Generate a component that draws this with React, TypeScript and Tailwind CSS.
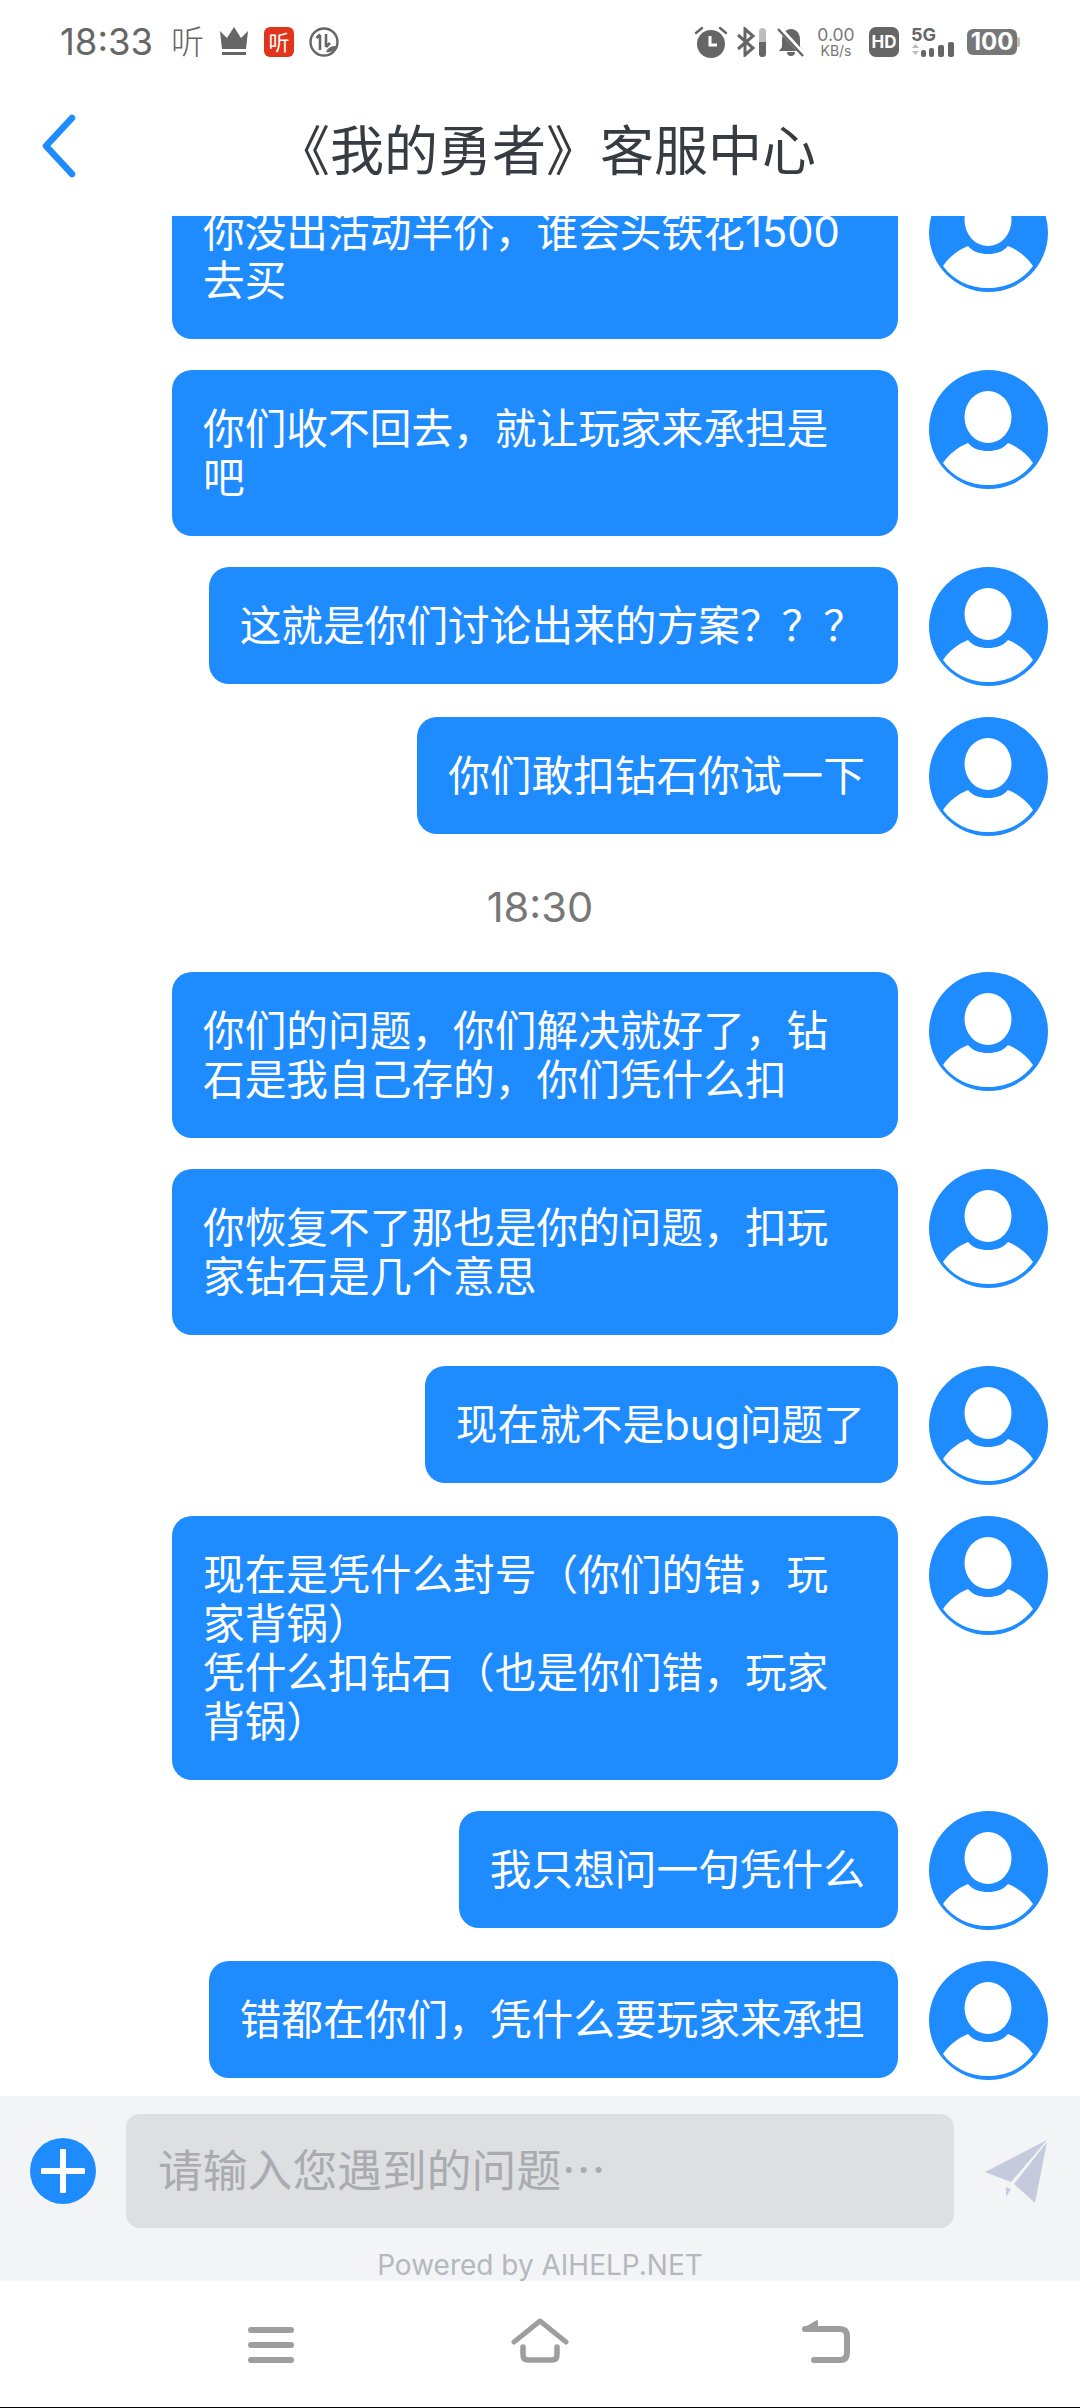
import React from 'react';

const messages: (string | { time: string })[] = [
  '你没出活动半价，谁会头铁花1500去买',
  '你们收不回去，就让玩家来承担是吧',
  '这就是你们讨论出来的方案？？？',
  '你们敢扣钻石你试一下',
  { time: '18:30' },
  '你们的问题，你们解决就好了，钻石是我自己存的，你们凭什么扣',
  '你恢复不了那也是你的问题，扣玩家钻石是几个意思',
  '现在就不是bug问题了',
  '现在是凭什么封号（你们的错，玩家背锅）\n凭什么扣钻石（也是你们错，玩家背锅）',
  '我只想问一句凭什么',
  '错都在你们，凭什么要玩家来承担',
];

function Avatar() {
  return (
    <svg width="119" height="119" viewBox="0 0 119 119" className="shrink-0">
      <circle cx="59.5" cy="59.5" r="59.5" fill="#1e8bff" />
      <ellipse cx="59" cy="47" rx="23.5" ry="26" fill="#fff" />
      <path d="M14 93 C20 84 29 77 39 73 C44 79 51 81 59 81 C67 81 74 79 79 73 C89 77 98 84 104 93 C94 107 78 115 59 115 C40 115 24 107 14 93 Z" fill="#fff" />
    </svg>
  );
}

function Bubble({ text }: { text: string }) {
  return (
    <div className="flex items-start justify-end gap-[31px]">
      <div className="max-w-[726px] whitespace-pre-line rounded-[20px] bg-[#1e8bff] pb-[33px] pl-[31px] pr-[33px] pt-[35px] text-[41.7px] leading-[49px] text-white">
        {text}
      </div>
      <Avatar />
    </div>
  );
}

function StatusLeft() {
  return (
    <div className="flex items-center gap-[15px]">
      <span className="mr-[3px] text-[36.5px] leading-none text-[#666]">18:33</span>
      <span className="text-[33px] font-light leading-none text-[#666]">听</span>
      <svg width="30" height="30" viewBox="0 0 30 30">
        <path d="M1 4 L8 11 L15 0 L22 11 L29 4 L27 22 H3 Z" fill="#666" />
        <rect x="3" y="25" width="24" height="3" fill="#666" />
      </svg>
      <div className="flex h-[30px] w-[30px] items-center justify-center rounded-[6px] bg-[#e0341c] text-[21px] leading-none text-white">听</div>
      <svg width="30" height="30" viewBox="0 0 30 30" fill="none" stroke="#666">
        <circle cx="15" cy="15" r="13.5" strokeWidth="2.4" />
        <path d="M11 23 V8 M7.5 11 L11 7.5" strokeWidth="2.6" />
        <path d="M17 7 V20 M17 20 L21 16" strokeWidth="2.6" />
        <path d="M17 25 C19 20 23 19 27 19 C26 23 22 26 17 25 Z" fill="#666" stroke="none" />
      </svg>
    </div>
  );
}

function StatusRight() {
  return (
    <div className="flex items-center">
      <svg width="34" height="32" viewBox="0 0 34 32" className="mr-[8px]">
        <circle cx="17" cy="18" r="14" fill="#666" />
        <path d="M16 10 V19 H23" fill="none" stroke="#fff" strokeWidth="3" />
        <path d="M2 7 L8 2 M32 7 L26 2" stroke="#666" strokeWidth="2.4" strokeLinecap="round" />
      </svg>
      <svg width="32" height="30" viewBox="0 0 32 30" className="mr-[9px]">
        <path d="M2 8 L17 21 L9 28 V2 L17 9 L2 22" fill="none" stroke="#666" strokeWidth="3" />
        <rect x="23" y="1" width="7" height="29" rx="3.5" fill="#bdbdbd" />
        <path d="M23 15 H30 V26.5 A3.5 3.5 0 0 1 23 26.5 Z" fill="#666" />
      </svg>
      <svg width="28" height="30" viewBox="0 0 28 30" className="mr-[12px]">
        <path d="M14 2 C20 2 23 7 23 13 V20 L26 24 H2 L5 20 V13 C5 7 8 2 14 2 Z" fill="#666" />
        <path d="M10 25 A4 4 0 0 0 18 25 Z" fill="#666" />
        <path d="M2 1 L27 28" stroke="#fff" strokeWidth="5" />
        <path d="M1 2 L26 29" stroke="#666" strokeWidth="2.4" />
      </svg>
      <div className="mr-[14px] flex w-[38px] flex-col items-center text-[#777]">
        <span className="text-[17.5px] leading-[16px]">0.00</span>
        <span className="text-[14px] leading-[15px]">KB/s</span>
      </div>
      <div className="mr-[12px] flex h-[30px] w-[30px] items-center justify-center rounded-[7px] bg-[#666] text-[17px] font-bold leading-none text-white">HD</div>
      <div className="mr-[10px] flex h-[30px] w-[46px] flex-col">
        <span className="text-[18px] font-bold leading-[15px] text-[#666]">5G</span>
        <svg width="46" height="15" viewBox="0 0 46 15">
          <path d="M1 6 L4.5 2 L8 6 Z M1 9 L4.5 13 L8 9 Z" fill="#bbb" />
          <rect x="10" y="8" width="5" height="7" rx="2" fill="#666" />
          <rect x="18" y="6" width="5" height="9" rx="2" fill="#666" />
          <rect x="27" y="3" width="6" height="12" rx="2" fill="#666" />
          <rect x="37" y="0" width="6" height="15" rx="2" fill="#666" />
        </svg>
      </div>
      <div className="flex h-[26px] w-[50px] items-center justify-center rounded-[6px] bg-[#777] text-[24px] font-bold leading-none text-white">100</div>
      <div className="h-[10px] w-[3px] rounded-r-[2px] bg-[#bbb]" />
    </div>
  );
}

export default function App() {
  return (
    <div className="flex h-[2408px] w-[1080px] flex-col overflow-hidden bg-white font-['Inter','Noto_Sans_CJK_SC',sans-serif]">
      {/* Status bar */}
      <div className="flex h-[84px] shrink-0 items-center justify-between pl-[60px] pr-[60px]">
        <StatusLeft />
        <StatusRight />
      </div>

      {/* Header */}
      <div className="relative flex h-[132px] shrink-0 items-center justify-center">
        <svg width="40" height="64" viewBox="0 0 40 64" className="absolute left-[39px] top-[30px]">
          <path d="M33 4 L7 32 L33 60" fill="none" stroke="#1e8bff" strokeWidth="6.5" strokeLinecap="round" strokeLinejoin="round" />
        </svg>
        <span className="pl-[12px] pt-[3px] text-[54px] leading-none text-[#373c42]">《我的勇者》客服中心</span>
      </div>

      {/* Messages, anchored to the bottom and cut off by the header */}
      <div className="flex min-h-0 flex-1 flex-col justify-end gap-[31px] overflow-hidden pb-[16px] pr-[32px]">
        {messages.map((m, i) =>
          typeof m === 'string' ? (
            <Bubble key={i} text={m} />
          ) : (
            <div key={i} className="-mr-[32px] flex h-[74px] shrink-0 items-center justify-center pt-[8px] text-[41.6px] leading-none text-[#777]">
              {m.time}
            </div>
          )
        )}
      </div>

      {/* Input bar */}
      <div className="h-[185px] shrink-0 overflow-hidden bg-[#f2f4f6]">
        <div className="flex h-[150px] items-center">
          <div className="ml-[30px] flex h-[66px] w-[66px] items-center justify-center rounded-full bg-[#1e8bff]">
            <svg width="44" height="44" viewBox="0 0 44 44">
              <path d="M22 2 V42 M2 22 H42" stroke="#fff" strokeWidth="6" strokeLinecap="round" />
            </svg>
          </div>
          <div className="ml-[30px] flex h-[114px] w-[828px] items-center rounded-[14px] bg-[#dddfe1] pl-[32px] text-[44.8px] leading-none text-[#a9abae]">
            请输入您遇到的问题⋯
          </div>
          <svg width="64" height="64" viewBox="0 0 64 64" className="ml-[31px]">
            <path d="M0 33 L62 1 L26 43 Z" fill="#c5cbdc" />
            <path d="M29 45 L62 3 L50 64 Z" fill="#c5cbdc" />
            <path d="M21 48 L26 50 L21 58 Z" fill="#c5cbdc" />
          </svg>
        </div>
        <div className="pt-[2px] text-center text-[28px] leading-[34px] text-[#b5b8bd]">Powered by AIHELP.NET</div>
      </div>

      {/* Navigation bar */}
      <div className="flex h-[126px] shrink-0 items-start pl-[248px] pt-[37px]">
        <svg width="46" height="46" viewBox="0 0 46 46" className="mt-[9px]">
          <path d="M3 3 H43 M3 18 H43 M3 33 H43" stroke="#9e9e9e" strokeWidth="6" strokeLinecap="round" />
        </svg>
        <svg width="58" height="46" viewBox="0 0 58 46" className="ml-[217px]">
          <path d="M3 24 L29 3 L55 24" fill="none" stroke="#9e9e9e" strokeWidth="5" strokeLinecap="round" strokeLinejoin="round" />
          <path d="M12 29 V37 Q12 42 17 42 H41 Q46 42 46 37 V29" fill="none" stroke="#9e9e9e" strokeWidth="5.5" strokeLinecap="round" />
        </svg>
        <svg width="48" height="46" viewBox="0 0 48 46" className="ml-[233px]">
          <path d="M3 11 H38 Q45 11 45 18 V35 Q45 42 38 42 H12" fill="none" stroke="#9e9e9e" strokeWidth="6" strokeLinecap="round" />
          <path d="M3 10 L15 3 V13 Z" fill="#9e9e9e" stroke="#9e9e9e" strokeWidth="2" strokeLinejoin="round" />
        </svg>
      </div>
      <div className="h-px shrink-0 bg-black" />
    </div>
  );
}
